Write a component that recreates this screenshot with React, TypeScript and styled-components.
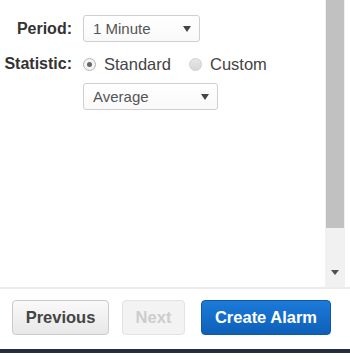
import React from "react";
import styled, { createGlobalStyle } from "styled-components";

const Global = createGlobalStyle`
  html, body { margin: 0; padding: 0; background: #fff; }
  body { font-family: "Liberation Sans", Arial, sans-serif; }
  * { box-sizing: border-box; }
`;

const Page = styled.div`
  width: 350px;
  height: 360px;
  display: flex;
  flex-direction: column;
  background: #fff;
  overflow: hidden;
`;

const ScrollArea = styled.div`
  height: 287px;
  display: flex;
  padding-right: 5px;
`;

const Content = styled.div`
  flex: 1;
  padding-top: 15px;
`;

const Form = styled.div`
  display: grid;
  grid-template-columns: 72px 1fr;
  column-gap: 11px;
  align-items: center;
`;

const Label = styled.div<{ $mt?: number }>`
  text-align: right;
  font-weight: bold;
  font-size: 16px;
  color: #333;
  margin-top: ${(p) => p.$mt ?? 0}px;
`;

const Field = styled.div<{ $mt?: number }>`
  display: flex;
  align-items: center;
  margin-top: ${(p) => p.$mt ?? 0}px;
`;

const Select = styled.div<{ $w: number }>`
  width: ${(p) => p.$w}px;
  height: 27px;
  border: 1px solid #cfcfcf;
  border-radius: 3px;
  background: linear-gradient(#ffffff, #f9f9f9);
  display: flex;
  align-items: center;
  justify-content: space-between;
  padding: 0 8px 0 9px;
  font-size: 15px;
  color: #555;
`;

const Arrow = styled.span`
  width: 0;
  height: 0;
  border-left: 4px solid transparent;
  border-right: 4px solid transparent;
  border-top: 6px solid #444;
`;

const RadioOption = styled.label`
  display: flex;
  align-items: center;
  gap: 8px;
  font-size: 16.5px;
  color: #444;
  margin-right: 18px;
  height: 22px;
`;

const RadioDot = styled.span<{ $checked?: boolean }>`
  width: 13px;
  height: 13px;
  border-radius: 50%;
  border: 1px solid ${(p) => (p.$checked ? "#b5b5b5" : "#cfcfcf")};
  background: ${(p) => (p.$checked ? "#f4f4f4" : "linear-gradient(#e6e6e6, #d8d8d8)")};
  display: flex;
  align-items: center;
  justify-content: center;
  &::after {
    content: "";
    width: 5px;
    height: 5px;
    border-radius: 50%;
    background: ${(p) => (p.$checked ? "#666" : "transparent")};
  }
`;

const ScrollTrack = styled.div`
  width: 20px;
  background: #f1f1f1;
  display: flex;
  flex-direction: column;
  align-items: center;
`;

const ScrollThumb = styled.div`
  width: 18px;
  height: 228px;
  background: #c1c1c1;
`;

const ScrollDown = styled.div`
  margin-top: 42px;
  width: 0;
  height: 0;
  border-left: 4px solid transparent;
  border-right: 4px solid transparent;
  border-top: 5px solid #505050;
`;

const Footer = styled.div`
  height: 62px;
  border-top: 2px solid #ececec;
  display: flex;
  align-items: flex-start;
  padding: 11px 0 0 12px;
`;

const Button = styled.button<{ $variant: "default" | "disabled" | "primary"; $w: number; $ml?: number }>`
  width: ${(p) => p.$w}px;
  height: 35px;
  margin-left: ${(p) => p.$ml ?? 0}px;
  border-radius: 4px;
  font-family: "Liberation Sans", Arial, sans-serif;
  font-weight: bold;
  font-size: 16.5px;
  padding: 0;
  border: 1px solid
    ${(p) =>
      p.$variant === "primary" ? "#0c59a6" : p.$variant === "disabled" ? "#e3e3e3" : "#cbcbcb"};
  background: ${(p) =>
    p.$variant === "primary"
      ? "linear-gradient(#1c7ad9, #0e60b8)"
      : p.$variant === "disabled"
      ? "#f3f3f3"
      : "linear-gradient(#f9f9f9, #e8e8e8)"};
  color: ${(p) => (p.$variant === "primary" ? "#fff" : p.$variant === "disabled" ? "#cdcdcd" : "#444")};
`;

const BottomBar = styled.div`
  height: 4px;
  background: #232f3e;
`;

export default function App() {
  return (
    <Page>
      <Global />
      <ScrollArea>
        <Content>
          <Form>
            <Label>Period:</Label>
            <Field>
              <Select $w={117}>
                <span>1 Minute</span>
                <Arrow />
              </Select>
            </Field>
            <Label $mt={11}>Statistic:</Label>
            <Field $mt={11}>
              <RadioOption>
                <RadioDot $checked />
                Standard
              </RadioOption>
              <RadioOption>
                <RadioDot />
                Custom
              </RadioOption>
            </Field>
            <div />
            <Field $mt={8}>
              <Select $w={135}>
                <span>Average</span>
                <Arrow />
              </Select>
            </Field>
          </Form>
        </Content>
        <ScrollTrack>
          <ScrollThumb />
          <ScrollDown />
        </ScrollTrack>
      </ScrollArea>
      <Footer>
        <Button $variant="default" $w={97}>Previous</Button>
        <Button $variant="disabled" $w={63} $ml={13}>Next</Button>
        <Button $variant="primary" $w={130} $ml={16}>Create Alarm</Button>
      </Footer>
      <BottomBar />
    </Page>
  );
}
